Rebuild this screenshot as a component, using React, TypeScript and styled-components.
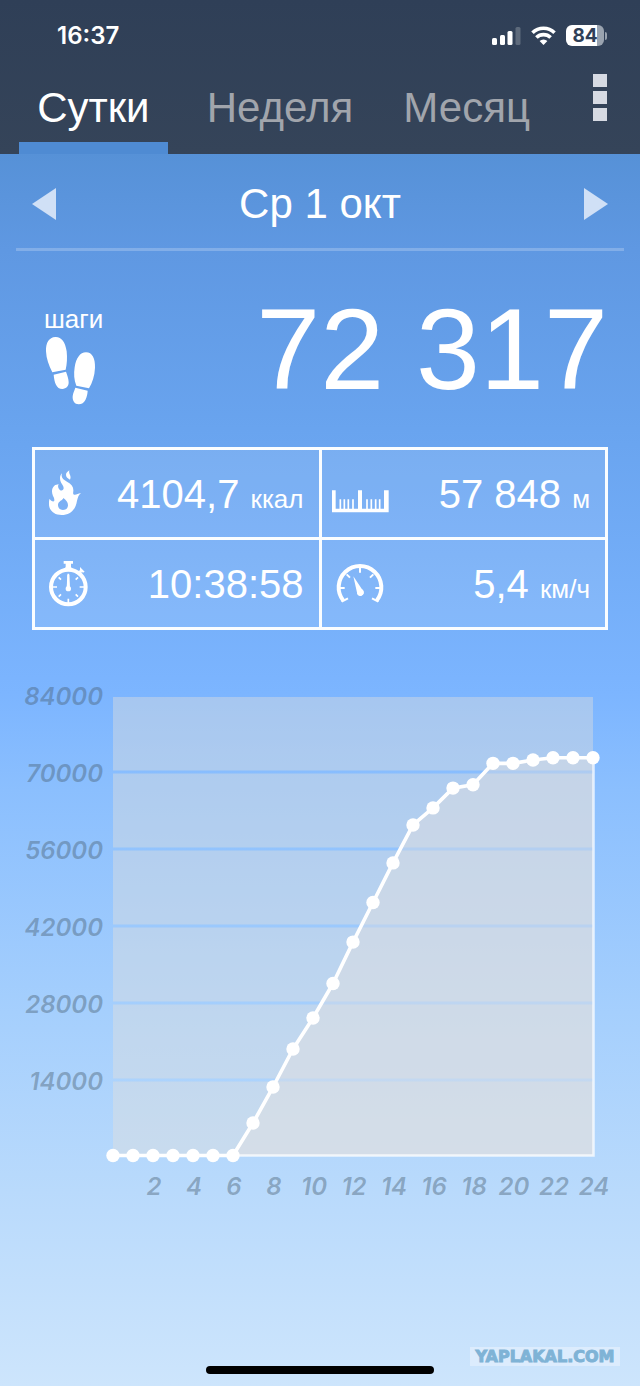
import React from "react";
import styled, { createGlobalStyle } from "styled-components";

const GlobalStyle = createGlobalStyle`
  *, *::before, *::after { box-sizing: border-box; }
  body { margin: 0; background: #cde5fc; }
  button { border: 0; padding: 0; margin: 0; background: none; color: inherit; font: inherit; cursor: pointer; }
`;

const Screen = styled.div`
  display: flex;
  flex-direction: column;
  min-height: 100vh;
  color: #fff;
  font-family: "Liberation Sans", Arial, sans-serif;
  background: linear-gradient(
    to bottom,
    #5691d7 11%,
    #5f98e2 18%,
    #69a4ef 31%,
    #7cb5ff 50%,
    #8bbffe 57%,
    #a5cffd 73%,
    #b9dafc 86%,
    #cde5fc 100%
  );
`;

const Header = styled.header`
  background: linear-gradient(#2f3f57, #354459);
`;

const StatusBar = styled.div`
  display: flex;
  align-items: center;
  justify-content: space-between;
  height: 71px;
  padding: 0 33px 0 57px;
`;

const Clock = styled.time`
  font: 600 24px/28px Inter, sans-serif;
`;

const StatusIcons = styled.div`
  display: flex;
  align-items: center;
  gap: 10px;
`;

const Battery = styled.div`
  display: flex;
  align-items: center;
  gap: 1px;
  &::after {
    content: "";
    width: 2px;
    height: 8px;
    border-radius: 0 2px 2px 0;
    background: #98a1ae;
  }
`;

const BatteryBody = styled.div`
  width: 38px;
  height: 21px;
  border-radius: 6px;
  background: linear-gradient(to right, #fff 31px, #9aa3af 31px);
  color: #2f3f57;
  font: 700 19px/21px Inter, sans-serif;
  text-align: center;
`;

const TabBar = styled.nav`
  display: grid;
  grid-template-columns: repeat(3, 7fr) 3fr;
  height: 83px;
`;

const Tab = styled.button<{ $active?: boolean }>`
  display: flex;
  flex-direction: column;
  justify-content: flex-end;
  padding: 0 19px;
  font-size: 42px;
  color: ${(p) => (p.$active ? "#fff" : "#a1a5ac")};
  &::after {
    content: "";
    width: 100%;
    height: 12px;
    background: ${(p) => (p.$active ? "#4f8bd3" : "transparent")};
  }
`;

const TabLabel = styled.span`
  align-self: center;
  line-height: 69px;
`;

const MenuButton = styled.button`
  display: flex;
  flex-direction: column;
  align-items: center;
  gap: 4px;
  padding-top: 3px;
`;

const MenuDot = styled.span`
  width: 14px;
  height: 13px;
  background: #d6dae3;
`;

const DateBar = styled.div`
  display: flex;
  align-items: center;
  justify-content: space-between;
  height: 97px;
  margin: 0 16px;
  padding: 6px 16px 0;
  border-bottom: 3px solid rgba(255, 255, 255, 0.22);
`;

const DateTitle = styled.h1`
  margin: 0;
  font-size: 42px;
  font-weight: 400;
  line-height: 48px;
`;

const ArrowButton = styled.button`
  display: flex;
  color: #d0e0f6;
`;

const Steps = styled.section`
  display: flex;
  justify-content: space-between;
  align-items: flex-start;
  padding: 40px 32px 40px 44px;
`;

const StepsCaption = styled.div`
  display: flex;
  flex-direction: column;
  gap: 2px;
  padding-top: 13px;
  font-size: 26px;
  line-height: 30px;
`;

const StepsValue = styled.div`
  font-size: 115px;
  line-height: 116px;
`;

const Stats = styled.section`
  display: grid;
  grid-template-columns: 1fr 1fr;
  gap: 3px;
  margin: 0 32px;
  border: 3px solid #fafdff;
  background:
    linear-gradient(#fafdff, #fafdff) center / 3px 100% no-repeat,
    linear-gradient(#fafdff, #fafdff) center / 100% 3px no-repeat;
`;

const Stat = styled.div`
  display: flex;
  align-items: center;
  justify-content: space-between;
  height: 87px;
  padding: 0 15px 0 8px;
  background: rgba(255, 255, 255, 0.1);
`;

const StatValue = styled.div`
  font-size: 40px;
  line-height: 48px;
  white-space: nowrap;
`;

const Unit = styled.span`
  font-size: 26px;
  line-height: 26px;
`;

const Chart = styled.svg`
  display: block;
  width: 100%;
`;

const AxisText = styled.text`
  font: italic 600 24px Inter, sans-serif;
  fill: rgba(70, 92, 110, 0.42);
`;

const Footer = styled.footer`
  display: grid;
  grid-template-columns: 1fr 228px 1fr;
  align-items: end;
  margin-top: auto;
  padding-bottom: 12px;
`;

const HomeIndicator = styled.div`
  grid-column: 2;
  height: 8px;
  border-radius: 4px;
  background: #000;
`;

const Watermark = styled.div`
  justify-self: end;
  width: 150px;
  margin: 0 20px 8px 0;
  background: #dcecfd;
  color: #7fb3d6;
  font: 700 16px/19px "DejaVu Sans", sans-serif;
  text-align: center;
  -webkit-text-stroke: 1px #7fb3d6;
`;

const SignalIcon = () => (
  <svg width="29" height="18" viewBox="0 0 29 18" fill="#fff" aria-hidden="true">
    <rect x="0" y="11" width="5" height="7" rx="1.500" />
    <rect x="8" y="8" width="5" height="10" rx="1.500" />
    <rect x="15.500" y="4" width="5" height="14" rx="1.500" />
    <rect x="23.500" y="0" width="5" height="18" rx="1.500" opacity="0.22" />
  </svg>
);

const WifiIcon = () => (
  <svg width="25" height="19" viewBox="0 0 25 19" fill="none" stroke="#fff" strokeWidth="3.600" aria-hidden="true">
    <path d="M1.500 6.800a15.600 15.600 0 0 1 22 0" />
    <path d="M5.400 11.600a10 10 0 0 1 14.200 0" />
    <path d="M12.500 19l-3.900-4a5.600 5.600 0 0 1 7.800 0z" fill="#fff" stroke="none" />
  </svg>
);

const Arrow = ({ d }: { d: string }) => (
  <svg width="24" height="32" viewBox="0 0 24 32" fill="currentColor" aria-hidden="true">
    <path d={d} />
  </svg>
);

const FootprintsIcon = () => (
  <svg width="56" height="70" viewBox="132 528 168 210" fill="#fff" aria-hidden="true">
    <path d="M166 531C184 530 196 546 200 574C202 594 201 612 197 629L157 637C146 616 139 596 138 574C137 548 147 532 166 531Z" />
    <path d="M161 644L198 635C202 647 206 656 206 667C206 679 199 686 187 687C169 687 163 667 161 644Z" />
    <path d="M258 577C277 577 286 595 285 623C284 648 277 668 267 685L229 677C222 660 221 641 224 622C228 595 240 577 258 577Z" />
    <path d="M226 683L263 692C262 711 255 733 236 733C224 733 217 723 218 709C219 699 223 692 226 683Z" />
  </svg>
);

const StatIcon = ({ children }: { children: React.ReactNode }) => (
  <svg width="60" height="60" viewBox="0 0 180 180" fill="#fff" stroke="none" aria-hidden="true">
    {children}
  </svg>
);

const FlameIcon = () => (
  <StatIcon>
    <path
      fillRule="evenodd"
      d="M57 28C53 41 60 46 72 53C86 61 92 69 91 81C90 88 90 92 94 92C100 93 105 88 114 87C107 92 105 99 102 110C98 137 82 153 56 153C32 153 17 138 18 118C18 113 18 109 20 104C23 110 28 113 33 112C35 108 34 103 30 96C25 84 26 72 34 65C38 62 42 63 47 60C44 66 45 72 50 77C55 82 62 79 62 72C62 64 54 59 52 50C50 41 51 34 57 28ZM61 102C60 109 45 111 45 123C45 132 52 138 60 138C69 138 75 132 75 123C75 115 69 108 61 102Z"
    />
    <path d="M79 19C76 31 87 36 81 47C73 42 69 38 69 32C69 26 74 23 79 19Z" />
  </StatIcon>
);

const StopwatchIcon = () => (
  <StatIcon>
    <circle cx="76" cy="99" r="52" fill="none" stroke="#fff" strokeWidth="12" />
    <path d="M62 21H90V29H84V39L90 47H62L68 39V29H62Z" />
    <path d="M111 39L125 53L120 56L117 54L109 63L102 56L111 48Z" />
    <path
      d="M76 59V96M76 134V147M27 99H42M110 99H125M47 70L54 77M105 70L98 77M47 128L54 121M105 128L98 121"
      stroke="#fff"
      strokeWidth="5"
    />
    <circle cx="76" cy="104" r="8" />
    <path d="M71 102L73 62H79L81 102Z" />
  </StatIcon>
);

const RulerIcon = () => (
  <StatIcon>
    <path d="M6 79H17V134H84V79H96V134H162V79H176V145H6Z" />
    <path
      d="M31 106V136M43 106V136M55 106V136M69 106V136M111 106V136M124 106V136M137 106V136M149 106V136"
      fill="none"
      stroke="#fff"
      strokeWidth="5"
    />
  </StatIcon>
);

const GaugeIcon = () => (
  <StatIcon>
    <path d="M40 140A64 64 0 1 1 140 140" fill="none" stroke="#fff" strokeWidth="12" />
    <path d="M35 143L54 133M145 143L126 133" stroke="#fff" strokeWidth="6" />
    <path d="M26 102H44M136 102H154M90 38V56M50 61L60 71M130 61L120 71" stroke="#fff" strokeWidth="6" />
    <path d="M70 67L100 112A9 9 0 0 1 82 120Z" />
    <circle cx="91" cy="115" r="10" />
  </StatIcon>
);

const PLOT = { left: 113, right: 593, base: 525.5, zero: 527, hour: 20, tick: 77 };
const LEVELS = [14000, 28000, 42000, 56000, 70000, 84000];
const HOURS = Array.from({ length: 12 }, (_, i) => (i + 1) * 2);
const TOTALS = [
  0, 0, 0, 0, 0, 0, 0, 5900, 12450, 19360, 25000, 31270, 38800, 46000, 53200, 60100, 63200, 66800, 67400, 71300,
  71300, 71900, 72317, 72317, 72317,
];

const StepsChart = () => {
  const rise = (steps: number) => (steps / 14000) * PLOT.tick;
  const points = TOTALS.map((steps, hour) => ({ x: PLOT.left + hour * PLOT.hour, y: PLOT.base - rise(steps) }));
  const line = points.map((p) => `${p.x},${p.y}`).join(" ");
  const last = points[points.length - 1];

  return (
    <Chart viewBox="0 0 640 590" role="img" aria-label="Шаги за сутки">
      {LEVELS.map((level) => {
        const y = PLOT.zero - rise(level);
        const top = y + (level === 84000 ? 2 : 1.5);
        const bottom = Math.min(y + PLOT.tick - 1.5, PLOT.base);
        return (
          <g key={level}>
            <rect x={PLOT.left} y={top} width={PLOT.right - PLOT.left} height={bottom - top} fill="rgba(229,226,217,0.4)" />
            <AxisText x="103" y={y + 10} textAnchor="end">
              {level}
            </AxisText>
          </g>
        );
      })}
      <polygon points={`${line} ${PLOT.right},${PLOT.base} ${PLOT.left},${PLOT.base}`} fill="rgba(229,226,222,0.4)" />
      <path
        d={`M${PLOT.left} ${PLOT.base}H${PLOT.right + 0.5}V${last.y}`}
        fill="none"
        stroke="rgba(255,255,255,0.75)"
        strokeWidth="2.500"
      />
      <polyline points={line} fill="none" stroke="#fff" strokeWidth="3.600" strokeLinejoin="round" />
      {points.map((p) => (
        <circle key={p.x} cx={p.x} cy={p.y} r="6.700" fill="#fff" />
      ))}
      {HOURS.map((hour) => (
        <AxisText key={hour} x={PLOT.left + hour * PLOT.hour + 1} y="565" textAnchor="middle">
          {hour}
        </AxisText>
      ))}
    </Chart>
  );
};

const App = () => (
  <>
    <GlobalStyle />
    <Screen>
      <Header>
        <StatusBar>
          <Clock>16:37</Clock>
          <StatusIcons>
            <SignalIcon />
            <WifiIcon />
            <Battery>
              <BatteryBody>84</BatteryBody>
            </Battery>
          </StatusIcons>
        </StatusBar>
        <TabBar>
          <Tab type="button" $active>
            <TabLabel>Сутки</TabLabel>
          </Tab>
          <Tab type="button">
            <TabLabel>Неделя</TabLabel>
          </Tab>
          <Tab type="button">
            <TabLabel>Месяц</TabLabel>
          </Tab>
          <MenuButton type="button" aria-label="Меню">
            <MenuDot />
            <MenuDot />
            <MenuDot />
          </MenuButton>
        </TabBar>
      </Header>

      <main>
        <DateBar>
          <ArrowButton type="button" aria-label="Предыдущий день">
            <Arrow d="M24 0V32L0 16Z" />
          </ArrowButton>
          <DateTitle>Ср 1 окт</DateTitle>
          <ArrowButton type="button" aria-label="Следующий день">
            <Arrow d="M0 0L24 16L0 32Z" />
          </ArrowButton>
        </DateBar>

        <Steps>
          <StepsCaption>
            шаги
            <FootprintsIcon />
          </StepsCaption>
          <StepsValue>72 317</StepsValue>
        </Steps>

        <Stats>
          <Stat>
            <FlameIcon />
            <StatValue>
              4104,7 <Unit>ккал</Unit>
            </StatValue>
          </Stat>
          <Stat>
            <RulerIcon />
            <StatValue>
              57 848 <Unit>м</Unit>
            </StatValue>
          </Stat>
          <Stat>
            <StopwatchIcon />
            <StatValue>10:38:58</StatValue>
          </Stat>
          <Stat>
            <GaugeIcon />
            <StatValue>
              5,4 <Unit>км/ч</Unit>
            </StatValue>
          </Stat>
        </Stats>

        <StepsChart />
      </main>

      <Footer>
        <HomeIndicator />
        <Watermark>YAPLAKAL.COM</Watermark>
      </Footer>
    </Screen>
  </>
);

export default App;
